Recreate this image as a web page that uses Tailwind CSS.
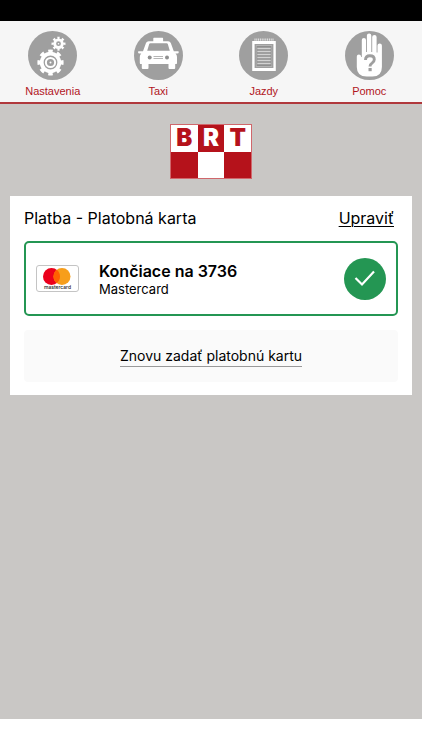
<!DOCTYPE html>
<html lang="sk">
<head>
<meta charset="utf-8">
<meta name="viewport" content="width=device-width, initial-scale=1">
<title>BRT Taxi – Platba</title>
<script src="https://cdn.jsdelivr.net/npm/@tailwindcss/browser@4"></script>
</head>
<body class="flex min-h-screen flex-col bg-white font-['Inter','Noto_Sans',sans-serif] text-black">
  <div class="h-5 shrink-0 bg-black"></div>

  <nav class="grid grid-cols-4 border-t border-b-2 border-t-black border-b-[#b0383c] bg-[#f6f6f6] pt-2.5 pb-[3px] font-['Liberation_Sans',Arial,sans-serif] text-[11px] leading-4 text-[#b1151d]">
    <a href="#nastavenia" class="flex flex-col items-center gap-[3px]">
      <svg class="size-[49px]" viewBox="0 0 49 49" aria-hidden="true">
        <circle cx="24.5" cy="24.5" r="24.5" fill="#9f9f9f"/>
        <g fill="none" stroke="#fff">
          <circle cx="22.5" cy="31.5" r="11.3" stroke-width="3.6" pathLength="16" stroke-dasharray="1 1" stroke-dashoffset="0.5"/>
          <circle cx="22.5" cy="31.5" r="8.8" stroke-width="3.8"/>
          <circle cx="22.5" cy="31.5" r="4.6" stroke-width="2"/>
          <circle cx="30.5" cy="12.7" r="5.8" stroke-width="2.4" pathLength="16" stroke-dasharray="1 1" stroke-dashoffset="0.5"/>
          <circle cx="30.5" cy="12.7" r="3.8" stroke-width="2.8"/>
        </g>
        <circle cx="22.5" cy="31.5" r="1" fill="#fff"/>
        <circle cx="30.5" cy="12.7" r="0.8" fill="#fff"/>
      </svg>
      Nastavenia
    </a>
    <a href="#taxi" class="flex flex-col items-center gap-[3px]">
      <svg class="size-[49px]" viewBox="0 0 49 49" aria-hidden="true">
        <circle cx="24.5" cy="24.5" r="24.5" fill="#9f9f9f"/>
        <path fill="#fff" d="M19.3 10.2V7.4q0-.6.6-.6h8.6q.6 0 .6.6v2.8h5q2 0 2.7 1.9l3 8.1h4.2q.8 0 .8.9 0 1.5-1.6 1.5h-1.7q1.5 1.2 1.5 3.3v6q0 1.2-1.2 1.2h-.6v4q0 1-1 1h-4.7q-1 0-1-1v-4H14.5v4q0 1-1 1H8.800q-1 0-1-1v-4h-.8q-1.2 0-1.2-1.2v-6q0-2.1 1.5-3.3H5.600Q4 22.600 4 21.100q0-.9.8-.9H9l3-8.100q.7-1.900 2.700-1.900z"/>
        <path fill="#9f9f9f" d="M16.3 12.2h16.4q.8 0 1.1.8l2 6.8H13.2l2-6.8q.3-.8 1.1-.8z"/>
        <circle cx="15.7" cy="26.4" r="2" fill="#8f8f8f"/>
        <circle cx="33" cy="26.4" r="2" fill="#8f8f8f"/>
        <path d="M19.5 25.5h9.5M19.5 27.5h9.5" stroke="#b5b5b5" stroke-width="1.2"/>
      </svg>
      Taxi
    </a>
    <a href="#jazdy" class="flex flex-col items-center gap-[3px]">
      <svg class="size-[49px]" viewBox="0 0 49 49" aria-hidden="true">
        <circle cx="24.5" cy="24.5" r="24.5" fill="#9f9f9f"/>
        <path d="M15.5 8.6h19.5" stroke="#e4e4e4" stroke-width="2.2" stroke-dasharray="1 .8"/>
        <path fill="#fff" d="M13.2 10h23.6v30H13.2z"/>
        <path fill="#c9c9c9" stroke="#9f9f9f" stroke-width="1.4" d="M16.3 13.8h17.4v22.4H16.3z"/>
        <path fill="#8e8e8e" d="M17.4 15h15.2v20H17.4z"/>
        <path d="M18.3 17.5h13.4M18.3 20.5h13.4M18.3 23.5h13.4M18.3 26.5h13.4M18.3 29.5h13.4M18.3 32.5h13.4" stroke="#d2d2d2" stroke-width="1.3"/>
      </svg>
      Jazdy
    </a>
    <a href="#pomoc" class="flex flex-col items-center gap-[3px]">
      <svg class="size-[49px]" viewBox="0 0 49 49" aria-hidden="true">
        <circle cx="24.5" cy="24.5" r="24.5" fill="#9f9f9f"/>
        <path fill="#fff" d="M16.8 26V9q0-2 2.1-2T21 9v12h.9V4.4q0-2 2.2-2t2.200 2V21h.9V6q0-2 2.2-2t2.2 2v15.5h.9V14.500q0-2 2.2-2t2.2 2V36q0 9.500-9.500 9.500h-5.700Q11.800 45.500 11.800 36V25.500q0-2 2.100-2t2.200 2v.5z"/>
        <path d="M20.500 29q0-4.200 4.400-4.200t4.400 3.700q0 2-2.300 3.600-2 1.300-2 3.300" fill="none" stroke="#9f9f9f" stroke-width="2.900"/>
        <path fill="#9f9f9f" d="M23.500 37h3.200v3.200h-3.200z"/>
      </svg>
      Pomoc
    </a>
  </nav>

  <main class="flex-1 bg-[#c9c7c5] px-[10px] pt-5">
    <h1 class="mx-auto grid w-[82px] grid-cols-3 border border-[#d0676c] text-center text-2xl leading-[26px] font-black text-[#b5121b]" aria-label="BRT">
      <span class="h-[27px] bg-white">B</span>
      <span class="h-[27px] bg-[#b5121b] text-white">R</span>
      <span class="h-[27px] bg-white">T</span>
      <span class="h-[26px] bg-[#b5121b]"></span>
      <span class="h-[26px] bg-white"></span>
      <span class="h-[26px] bg-[#b5121b]"></span>
    </h1>

    <section class="mt-[17px] bg-white px-[14px] pt-[11px] pb-[13px]">
      <header class="flex items-center justify-between pr-1 text-base leading-[22px]">
        <h2>Platba - Platobná karta</h2>
        <a href="#upravit" class="underline decoration-1 underline-offset-2">Upraviť</a>
      </header>

      <button type="button" aria-pressed="true" class="mt-3 flex h-[75px] w-full items-center rounded-[5px] border-2 border-[#249653] pr-2.5 pl-2.5 text-left">
        <svg class="h-[27px] w-[43px] shrink-0" viewBox="0 0 43 27" aria-hidden="true">
          <rect x=".5" y=".5" width="42" height="26" rx="2.5" fill="#fff" stroke="#c4c4c4"/>
          <circle cx="15.5" cy="11.5" r="8.5" fill="#eb001b"/>
          <circle cx="26" cy="11.5" r="8.5" fill="#f79e1b"/>
          <path fill="#ff5f00" d="M20.75 4.8a8.5 8.5 0 0 1 0 13.4 8.5 8.5 0 0 1 0-13.4z"/>
          <text x="21.5" y="24.3" text-anchor="middle" font-family="Inter, sans-serif" font-size="5" font-weight="500" fill="#222">mastercard</text>
        </svg>
        <span class="ml-5 flex flex-1 flex-col">
          <span class="text-base leading-5 font-semibold">Končiace na 3736</span>
          <span class="text-[13px] leading-4">Mastercard</span>
        </span>
        <svg class="size-[42px] shrink-0" viewBox="0 0 42 42" aria-hidden="true">
          <circle cx="21" cy="21" r="21" fill="#249653"/>
          <path d="M11.5 20l6.5 6.5L30 13.5" fill="none" stroke="#fff" stroke-width="2.2"/>
        </svg>
      </button>

      <button type="button" class="mt-[14px] flex h-[52px] w-full items-center justify-center rounded bg-[#fafafa] text-sm leading-5">
        <span class="border-b border-[#999]">Znovu zadať platobnú kartu</span>
      </button>
    </section>
  </main>

  <div class="h-[31px] shrink-0 bg-white"></div>
</body>
</html>
